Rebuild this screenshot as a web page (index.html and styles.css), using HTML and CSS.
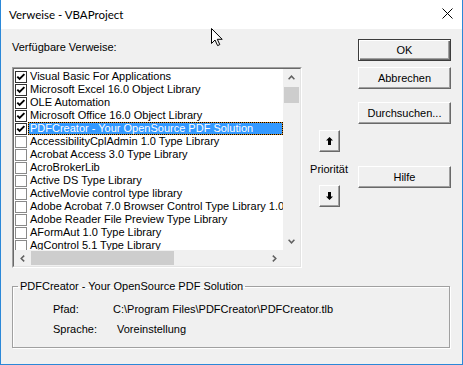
FILE: index.html
```html
<!DOCTYPE html>
<html lang="de">
<head>
<meta charset="utf-8">
<title>Verweise - VBAProject</title>
<link rel="stylesheet" href="styles.css">
</head>
<body>
<div class="window">
  <div class="titlebar">
    <span class="title">Verweise - VBAProject</span>
    <svg class="close" width="11" height="11" viewBox="0 0 11 11"><path d="M0.5 0.5 L10.5 10.5 M10.5 0.5 L0.5 10.5" stroke="#000" stroke-width="1" fill="none"/></svg>
  </div>
  <div class="client">
    <div class="main">
      <div class="refs">
        <div class="label">Verfügbare Verweise:</div>
        <div class="listbox">
          <div class="listbox-inner">
            <div class="list-top">
              <div class="items">
                <div class="row"><span class="cb on"><svg width="10" height="10" viewBox="0 0 10 10"><polyline points="1.3,4.6 3.6,6.9 8.4,2.1" fill="none" stroke="#000" stroke-width="1.9"/></svg></span><span class="txt">Visual Basic For Applications</span></div>
                <div class="row"><span class="cb on"><svg width="10" height="10" viewBox="0 0 10 10"><polyline points="1.3,4.6 3.6,6.9 8.4,2.1" fill="none" stroke="#000" stroke-width="1.9"/></svg></span><span class="txt">Microsoft Excel 16.0 Object Library</span></div>
                <div class="row"><span class="cb on"><svg width="10" height="10" viewBox="0 0 10 10"><polyline points="1.3,4.6 3.6,6.9 8.4,2.1" fill="none" stroke="#000" stroke-width="1.9"/></svg></span><span class="txt">OLE Automation</span></div>
                <div class="row"><span class="cb on"><svg width="10" height="10" viewBox="0 0 10 10"><polyline points="1.3,4.6 3.6,6.9 8.4,2.1" fill="none" stroke="#000" stroke-width="1.9"/></svg></span><span class="txt">Microsoft Office 16.0 Object Library</span></div>
                <div class="row"><span class="cb on"><svg width="10" height="10" viewBox="0 0 10 10"><polyline points="1.3,4.6 3.6,6.9 8.4,2.1" fill="none" stroke="#000" stroke-width="1.9"/></svg></span><span class="txt sel">PDFCreator - Your OpenSource PDF Solution</span></div>
                <div class="row"><span class="cb"></span><span class="txt">AccessibilityCplAdmin 1.0 Type Library</span></div>
                <div class="row"><span class="cb"></span><span class="txt">Acrobat Access 3.0 Type Library</span></div>
                <div class="row"><span class="cb"></span><span class="txt">AcroBrokerLib</span></div>
                <div class="row"><span class="cb"></span><span class="txt">Active DS Type Library</span></div>
                <div class="row"><span class="cb"></span><span class="txt">ActiveMovie control type library</span></div>
                <div class="row"><span class="cb"></span><span class="txt">Adobe Acrobat 7.0 Browser Control Type Library 1.0</span></div>
                <div class="row"><span class="cb"></span><span class="txt">Adobe Reader File Preview Type Library</span></div>
                <div class="row"><span class="cb"></span><span class="txt">AFormAut 1.0 Type Library</span></div>
                <div class="row"><span class="cb"></span><span class="txt">AgControl 5.1 Type Library</span></div>
              </div>
              <div class="vscroll">
                <div class="sb-btn"><svg width="7" height="5" viewBox="0 0 7 5"><polyline points="0.6,4.2 3.5,1.2 6.4,4.2" fill="none" stroke="#606060" stroke-width="1.5"/></svg></div>
                <div class="vtrack"><div class="vthumb"></div></div>
                <div class="sb-btn"><svg width="7" height="5" viewBox="0 0 7 5"><polyline points="0.6,0.8 3.5,3.8 6.4,0.8" fill="none" stroke="#606060" stroke-width="1.5"/></svg></div>
              </div>
            </div>
            <div class="list-bottom">
              <div class="hscroll">
                <div class="sb-btn h"><svg width="5" height="7" viewBox="0 0 5 7"><polyline points="4.2,0.6 1.2,3.5 4.2,6.4" fill="none" stroke="#606060" stroke-width="1.5"/></svg></div>
                <div class="htrack"><div class="hthumb"></div></div>
                <div class="sb-btn h"><svg width="5" height="7" viewBox="0 0 5 7"><polyline points="0.8,0.6 3.8,3.5 0.8,6.4" fill="none" stroke="#606060" stroke-width="1.5"/></svg></div>
              </div>
              <div class="corner"></div>
            </div>
          </div>
        </div>
      </div>
      <div class="prio">
        <button class="btn arrow" type="button"><svg width="7" height="8" viewBox="0 0 7 8"><path d="M3.5 0 L7 3.5 H5 V8 H2 V3.5 H0 Z" fill="#000"/></svg></button>
        <div class="prio-label">Priorität</div>
        <button class="btn arrow" type="button"><svg width="7" height="8" viewBox="0 0 7 8"><path d="M3.5 8 L7 4.5 H5 V0 H2 V4.5 H0 Z" fill="#000"/></svg></button>
      </div>
      <div class="buttons">
        <button class="btn default ok" type="button">OK</button>
        <button class="btn cancel" type="button">Abbrechen</button>
        <button class="btn browse" type="button">Durchsuchen...</button>
        <button class="btn help" type="button">Hilfe</button>
      </div>
    </div>
    <fieldset class="group">
      <legend>PDFCreator - Your OpenSource PDF Solution</legend>
      <div class="info">
        <span>Pfad:</span><span>C:\Program Files\PDFCreator\PDFCreator.tlb</span>
        <span>Sprache:</span><span class="lang">Voreinstellung</span>
      </div>
    </fieldset>
  </div>
  <svg class="cursor" width="13" height="19" viewBox="0 0 13 19"><path d="M0.5 0.5 V15.5 L4 12 L6.6 17.6 L8.8 16.6 L6.3 11.3 H11.2 Z" fill="#fff" stroke="#000" stroke-width="1" stroke-linejoin="miter"/></svg>
</div>
</body>
</html>
```

FILE: styles.css
```css
* { box-sizing: border-box; }
html, body { margin: 0; padding: 0; background: #f0f0f0; }
body {
  font-family: "Liberation Sans", Arial, sans-serif;
  font-size: 11px;
  color: #000;
}
.window {
  position: relative;
  width: 463px;
  height: 365px;
  background: #f0f0f0;
  border-left: 1px solid #2b88d8;
  border-right: 1px solid #2b88d8;
  border-bottom: 1px solid #2b88d8;
  overflow: hidden;
}
.titlebar {
  height: 29px;
  background: #fff;
  display: flex;
  align-items: center;
  justify-content: space-between;
  padding: 0 9px 0 8px;
}
.title {
  font-family: Lato, "Noto Sans", sans-serif;
  font-size: 11.5px;
  line-height: 29px;
  color: #000;
}
.close { display: block; margin-top: -2px; }
.client {
  padding: 0 11px 0 11px;
}
.main {
  display: flex;
  align-items: flex-start;
}
.refs { width: 290px; }
.label {
  margin-top: 12px;
  line-height: 13px;
  height: 13px;
}
.listbox {
  margin-top: 13px;
  width: 290px;
  border: 1px solid;
  border-color: #a0a0a0 #fff #fff #a0a0a0;
}
.listbox-inner {
  border: 1px solid;
  border-color: #696969 #e3e3e3 #e3e3e3 #696969;
}
.list-top {
  display: flex;
  height: 181px;
}
.items {
  flex: 1;
  background: #fff;
  overflow: hidden;
  min-width: 0;
  padding-top: 1px;
}
.row {
  display: flex;
  align-items: center;
  height: 13px;
  white-space: nowrap;
}
.cb {
  flex: none;
  width: 12px;
  height: 12px;
  margin-left: 1px;
  border: 1px solid #8a8a8a;
  background: #fff;
  display: flex;
  align-items: center;
  justify-content: center;
}
.cb.on { border-color: #333; }
.cb svg { display: block; }
.txt {
  flex: 1;
  margin-left: 1px;
  padding: 0 1px;
  line-height: 11px;
  height: 13px;
  border: 1px dotted transparent;
  white-space: nowrap;
}
.txt.sel {
  color: #fff;
  border-color: #000;
  background: linear-gradient(#3399ff, #3399ff) padding-box, #d98a1a;
}
.vscroll {
  width: 17px;
  flex: none;
  background: #f0f0f0;
  display: flex;
  flex-direction: column;
}
.sb-btn {
  height: 17px;
  flex: none;
  display: flex;
  align-items: center;
  justify-content: center;
}
.sb-btn.h { width: 17px; height: 16px; }
.sb-btn svg { display: block; }
.vtrack { flex: 1; padding: 1px 1px 0 1px; }
.vthumb { height: 16px; background: #cdcdcd; }
.list-bottom {
  display: flex;
  height: 16px;
}
.hscroll {
  flex: 1;
  display: flex;
  background: #f0f0f0;
}
.htrack { flex: 1; padding: 1px 0; }
.hthumb { width: 143px; height: 14px; background: #cdcdcd; }
.corner { width: 17px; background: #f0f0f0; }

.prio {
  width: 40px;
  margin-left: 7px;
  margin-top: 101px;
  display: flex;
  flex-direction: column;
  align-items: center;
}
.prio-label {
  margin: 11px 0 9px;
  line-height: 13px;
  white-space: nowrap;
}
.buttons {
  width: 93px;
  margin-left: 9px;
  display: flex;
  flex-direction: column;
}
.btn {
  font-family: "Liberation Sans", Arial, sans-serif;
  font-size: 11px;
  color: #000;
  height: 22px;
  padding: 0;
  margin: 0;
  background: #f0f0f0;
  border: 1px solid;
  border-color: #fff #696969 #696969 #fff;
  box-shadow: inset -1px -1px 0 #a0a0a0;
  display: flex;
  align-items: center;
  justify-content: center;
  line-height: 13px;
}
.btn.arrow { width: 21px; }
.btn.default {
  border: 1px solid #3c3c3c;
  box-shadow: inset 1px 1px 0 #fff, inset -1px -1px 0 #696969, inset -2px -2px 0 #a0a0a0;
}
.ok { margin-top: 10px; }
.cancel { margin-top: 6px; }
.browse { margin-top: 13px; }
.help { margin-top: 42px; }

.group {
  margin: 12px 1px 0 0;
  padding: 0 5px 11px 5px;
  border: 1px solid #a0a0a0;
  box-shadow: inset 1px 1px 0 #fff, 1px 1px 0 #fff;
  min-width: 0;
}
.group legend {
  padding: 0 2px;
  line-height: 13px;
}
.info {
  margin-top: 10px;
  padding-left: 35px;
  display: grid;
  grid-template-columns: 60px auto;
  row-gap: 7px;
  line-height: 13px;
}
.lang { padding-left: 4px; }
.cursor {
  position: absolute;
  left: 210px;
  top: 28px;
}
```
